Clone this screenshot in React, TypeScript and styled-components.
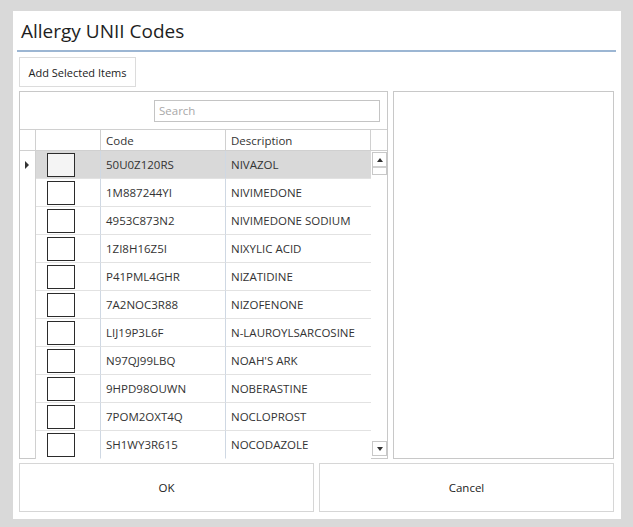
import React from "react";
import styled, { createGlobalStyle } from "styled-components";

const GlobalStyle = createGlobalStyle`
    html, body {
        margin: 0;
        padding: 0;
        background: #d9d9d9;
        font-family: "Open Sans", "Noto Sans", sans-serif;
        color: #333;
    }
`;

const rows = [
    { code: "50U0Z120RS", desc: "NIVAZOL" },
    { code: "1M887244YI", desc: "NIVIMEDONE" },
    { code: "4953C873N2", desc: "NIVIMEDONE SODIUM" },
    { code: "1ZI8H16Z5I", desc: "NIXYLIC ACID" },
    { code: "P41PML4GHR", desc: "NIZATIDINE" },
    { code: "7A2NOC3R88", desc: "NIZOFENONE" },
    { code: "LIJ19P3L6F", desc: "N-LAUROYLSARCOSINE" },
    { code: "N97QJ99LBQ", desc: "NOAH'S ARK" },
    { code: "9HPD98OUWN", desc: "NOBERASTINE" },
    { code: "7POM2OXT4Q", desc: "NOCLOPROST" },
    { code: "SH1WY3R615", desc: "NOCODAZOLE" },
];

const Dialog = styled.div`
    margin: 11px 0 0 13px;
    width: 608px;
    height: 508px;
    box-sizing: border-box;
    background: #fff;
    padding: 0 7px 7px 6px;
    display: flex;
    flex-direction: column;
`;

const Title = styled.h1`
    margin: 0 -2px;
    height: 41px;
    padding-left: 4px;
    box-sizing: border-box;
    display: flex;
    align-items: center;
    font-size: 19px;
    font-weight: 400;
    color: #1e1e1e;
    border-bottom: 2px solid #9cb6d3;
`;

const Toolbar = styled.div`
    display: flex;
    padding: 5px 0 4px;
`;

const ToolButton = styled.button`
    height: 30px;
    width: 117px;
    padding: 0;
    background: #fff;
    border: 1px solid #dcdcdc;
    font-family: inherit;
    font-size: 11px;
    color: #222;
`;

const Content = styled.div`
    display: flex;
    gap: 5px;
    height: 368px;
`;

const GridPanel = styled.div`
    width: 369px;
    border: 1px solid #c8c8c8;
    box-sizing: border-box;
    display: flex;
    flex-direction: column;
`;

const SearchBar = styled.div`
    height: 37px;
    display: flex;
    align-items: center;
    justify-content: flex-end;
    padding-right: 7px;
`;

const SearchInput = styled.input`
    width: 226px;
    height: 22px;
    box-sizing: border-box;
    border: 1px solid #c4c4c4;
    padding: 0 4px;
    font-family: inherit;
    font-size: 11.5px;
    outline: none;
    &::placeholder {
        color: #a8a8a8;
    }
`;

const HeaderRow = styled.div`
    display: grid;
    grid-template-columns: 16px 65px 125px 145px 1fr;
    height: 22px;
    box-sizing: border-box;
    border-top: 1px solid #d0d0d0;
    border-bottom: 1px solid #d0d0d0;
`;

const HeaderCell = styled.div`
    border-right: 1px solid #d0d0d0;
    font-size: 11.5px;
    color: #333;
    padding-left: 5px;
    display: flex;
    align-items: center;
    &:last-child {
        border-right: none;
    }
`;

const Body = styled.div`
    flex: 1;
    display: flex;
    min-height: 0;
`;

const RowList = styled.div`
    width: 351px;
    display: flex;
    flex-direction: column;
`;

const Row = styled.div`
    display: grid;
    grid-template-columns: 16px 65px 125px 145px;
    height: 28px;
    flex-shrink: 0;
`;

const RowHead = styled.div`
    border-right: 1px solid #d0d0d0;
    display: flex;
    align-items: center;
    justify-content: center;
`;

const Cell = styled.div<{ $selected?: boolean; $last?: boolean }>`
    background: ${(p) => (p.$selected ? "#d9d9d9" : "#fff")};
    border-bottom: 1px solid ${(p) => (p.$last ? "transparent" : "#e2e2e2")};
    border-right: 1px solid #cfd8e3;
    box-sizing: border-box;
    display: flex;
    align-items: center;
    padding-left: 5px;
    font-size: 11.5px;
    color: #333;
    &:last-child {
        border-right: none;
    }
`;

const CheckCell = styled(Cell)`
    padding-left: 11px;
`;

const CheckBox = styled.div<{ $selected?: boolean }>`
    width: 28px;
    height: 24px;
    box-sizing: border-box;
    border: 1px solid #2b2b2b;
    background: ${(p) => (p.$selected ? "#f4f4f4" : "#fff")};
`;

const Pointer = styled.div`
    width: 0;
    height: 0;
    border-top: 4px solid transparent;
    border-bottom: 4px solid transparent;
    border-left: 4px solid #333;
    margin-left: -2px;
`;

const ScrollTrack = styled.div`
    flex: 1;
    display: flex;
    flex-direction: column;
    justify-content: space-between;
    padding: 1px;
`;

const ScrollTop = styled.div`
    display: flex;
    flex-direction: column;
    border: 1px solid #c8c8c8;
    width: 15px;
    box-sizing: border-box;
`;

const ArrowBox = styled.div<{ $down?: boolean }>`
    width: 13px;
    height: 13px;
    display: flex;
    align-items: center;
    justify-content: center;
    &::after {
        content: "";
        border-left: 3.5px solid transparent;
        border-right: 3.5px solid transparent;
        ${(p) =>
            p.$down
                ? "border-top: 4px solid #333;"
                : "border-bottom: 4px solid #333;"}
    }
`;

const Thumb = styled.div`
    height: 6px;
    border-top: 2px solid #d0d0d0;
`;

const ScrollBottom = styled.div`
    border: 1px solid #c8c8c8;
    width: 15px;
    height: 15px;
    box-sizing: border-box;
    margin-bottom: 1px;
`;

const SidePanel = styled.div`
    flex: 1;
    border: 1px solid #c8c8c8;
`;

const Buttons = styled.div`
    display: flex;
    gap: 5px;
    margin-top: 4px;
    height: 49px;
`;

const DialogButton = styled.button`
    flex: 1;
    background: #fff;
    border: 1px solid #d6d6d6;
    font-family: inherit;
    font-size: 11.5px;
    color: #222;
`;

const App = () => {
    return (
        <>
            <GlobalStyle />
            <Dialog>
                <Title>Allergy UNII Codes</Title>
                <Toolbar>
                    <ToolButton>Add Selected Items</ToolButton>
                </Toolbar>
                <Content>
                    <GridPanel>
                        <SearchBar>
                            <SearchInput placeholder='Search' />
                        </SearchBar>
                        <HeaderRow>
                            <HeaderCell />
                            <HeaderCell />
                            <HeaderCell>Code</HeaderCell>
                            <HeaderCell>Description</HeaderCell>
                            <HeaderCell />
                        </HeaderRow>
                        <Body>
                            <RowList>
                                {rows.map((r, i) => {
                                    const sel = i === 0;
                                    const last = i === rows.length - 1;
                                    return (
                                        <Row key={r.code}>
                                            <RowHead>{sel && <Pointer />}</RowHead>
                                            <CheckCell $selected={sel} $last={last}>
                                                <CheckBox $selected={sel} />
                                            </CheckCell>
                                            <Cell $selected={sel} $last={last}>
                                                {r.code}
                                            </Cell>
                                            <Cell $selected={sel} $last={last}>
                                                {r.desc}
                                            </Cell>
                                        </Row>
                                    );
                                })}
                            </RowList>
                            <ScrollTrack>
                                <ScrollTop>
                                    <ArrowBox />
                                    <Thumb />
                                </ScrollTop>
                                <ScrollBottom>
                                    <ArrowBox $down />
                                </ScrollBottom>
                            </ScrollTrack>
                        </Body>
                    </GridPanel>
                    <SidePanel />
                </Content>
                <Buttons>
                    <DialogButton>OK</DialogButton>
                    <DialogButton>Cancel</DialogButton>
                </Buttons>
            </Dialog>
        </>
    );
};

export default App;
